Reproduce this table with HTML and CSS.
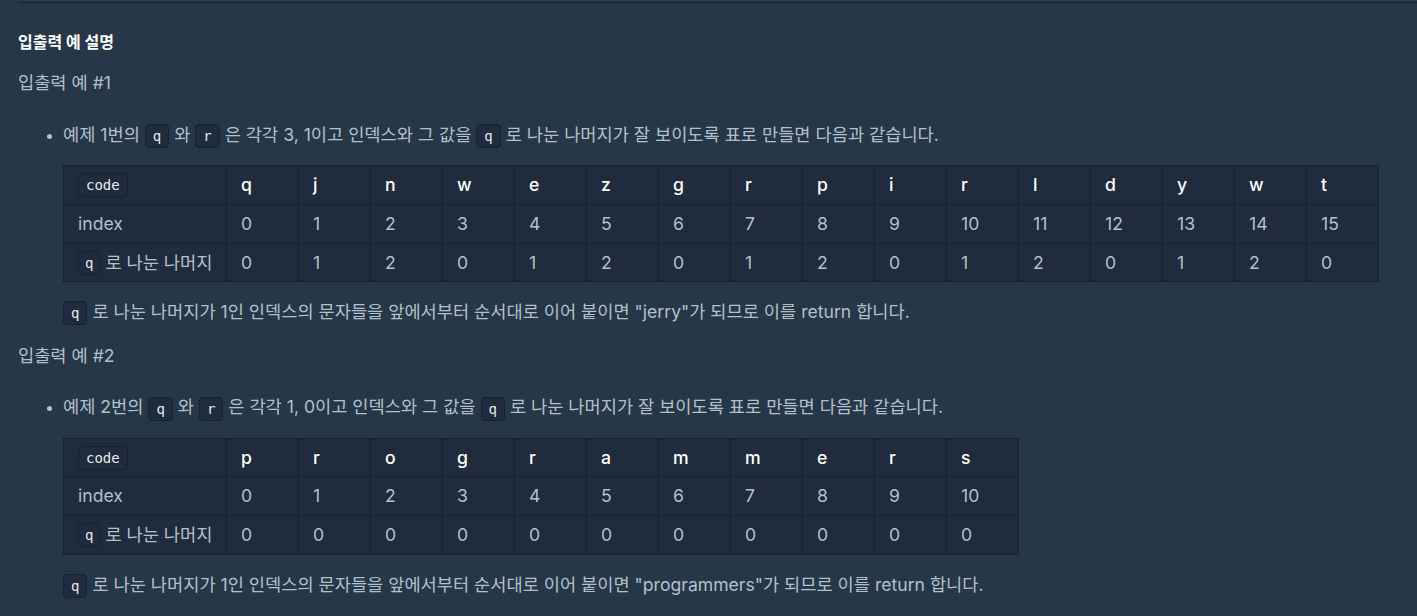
FILE: index.html
```html
<!DOCTYPE html>
<html lang="ko">
<head>
<meta charset="UTF-8">
<title>입출력 예 설명</title>
<link rel="stylesheet" href="styles.css">
</head>
<body>
<div class="guide">
    <hr>
    <h5>입출력 예 설명</h5>
    <p class="sub">입출력 예 #1</p>
    <ul>
        <li>
            <p>예제 1번의 <code>q</code> 와 <code>r</code> 은 각각 3, 1이고 인덱스와 그 값을 <code>q</code> 로 나눈 나머지가 잘 보이도록 표로 만들면 다음과 같습니다.</p>
            <table>
                <thead>
                    <tr><th><code>code</code></th><th>q</th><th>j</th><th>n</th><th>w</th><th>e</th><th>z</th><th>g</th><th>r</th><th>p</th><th>i</th><th>r</th><th>l</th><th>d</th><th>y</th><th>w</th><th>t</th></tr>
                </thead>
                <tbody>
                    <tr><td>index</td><td>0</td><td>1</td><td>2</td><td>3</td><td>4</td><td>5</td><td>6</td><td>7</td><td>8</td><td>9</td><td>10</td><td>11</td><td>12</td><td>13</td><td>14</td><td>15</td></tr>
                    <tr><td><code>q</code> 로 나눈 나머지</td><td>0</td><td>1</td><td>2</td><td>0</td><td>1</td><td>2</td><td>0</td><td>1</td><td>2</td><td>0</td><td>1</td><td>2</td><td>0</td><td>1</td><td>2</td><td>0</td></tr>
                </tbody>
            </table>
            <p><code>q</code> 로 나눈 나머지가 1인 인덱스의 문자들을 앞에서부터 순서대로 이어 붙이면 "jerry"가 되므로 이를 return 합니다.</p>
        </li>
    </ul>
    <p class="sub second">입출력 예 #2</p>
    <ul class="next">
        <li>
            <p>예제 2번의 <code>q</code> 와 <code>r</code> 은 각각 1, 0이고 인덱스와 그 값을 <code>q</code> 로 나눈 나머지가 잘 보이도록 표로 만들면 다음과 같습니다.</p>
            <table>
                <thead>
                    <tr><th><code>code</code></th><th>p</th><th>r</th><th>o</th><th>g</th><th>r</th><th>a</th><th>m</th><th>m</th><th>e</th><th>r</th><th>s</th></tr>
                </thead>
                <tbody>
                    <tr><td>index</td><td>0</td><td>1</td><td>2</td><td>3</td><td>4</td><td>5</td><td>6</td><td>7</td><td>8</td><td>9</td><td>10</td></tr>
                    <tr><td><code>q</code> 로 나눈 나머지</td><td>0</td><td>0</td><td>0</td><td>0</td><td>0</td><td>0</td><td>0</td><td>0</td><td>0</td><td>0</td><td>0</td></tr>
                </tbody>
            </table>
            <p><code>q</code> 로 나눈 나머지가 1인 인덱스의 문자들을 앞에서부터 순서대로 이어 붙이면 "programmers"가 되므로 이를 return 합니다.</p>
        </li>
    </ul>
</div>
</body>
</html>
```

FILE: styles.css
```css
body {
    margin: 0;
    background-color: #263747;
    color: #b2c0cc;
    font-family: Inter, "Noto Sans CJK KR", sans-serif;
    font-size: 17.6px;
    line-height: 24px;
}
.guide {
    padding-left: 18px;
    padding-top: 2px;
}
hr {
    margin: 0;
    border: none;
    border-top: 1px solid #172130;
}
h5 {
    margin: 27px 0 0;
    font-size: 16px;
    font-weight: 700;
    color: #ffffff;
}
p {
    margin: 0;
}
.sub {
    margin-top: 17px;
}
.sub.second {
    margin-top: 19px;
}
ul {
    margin: 28px 0 0;
    padding-left: 45px;
}
ul.next {
    margin-top: 27px;
}
li::marker {
    color: #b2c0cc;
    font-size: 14px;
}
code {
    display: inline-block;
    font-family: "DejaVu Sans Mono", monospace;
    font-size: 14px;
    line-height: 22px;
    padding: 0 7px;
    background-color: #202b3d;
    border: 1px solid #172130;
    border-radius: 4px;
    color: #e6ebf0;
    vertical-align: middle;
}
table {
    border-collapse: collapse;
    margin: 17px 0 18px;
    background-color: #202b3d;
}
th, td {
    border: 1px solid #172130;
    padding: 7px 14px 6.67px;
    text-align: left;
    width: 43px;
    height: 24px;
    white-space: nowrap;
    line-height: 24px;
}
th:first-child, td:first-child {
    width: 138px;
    padding-right: 10px;
}
th code, td code {
    padding: 0 6px;
    vertical-align: top;
}
th code {
    padding: 0 7px;
}
th {
    color: #ffffff;
    font-weight: 500;
}
td {
    color: #b2c0cc;
}
```
